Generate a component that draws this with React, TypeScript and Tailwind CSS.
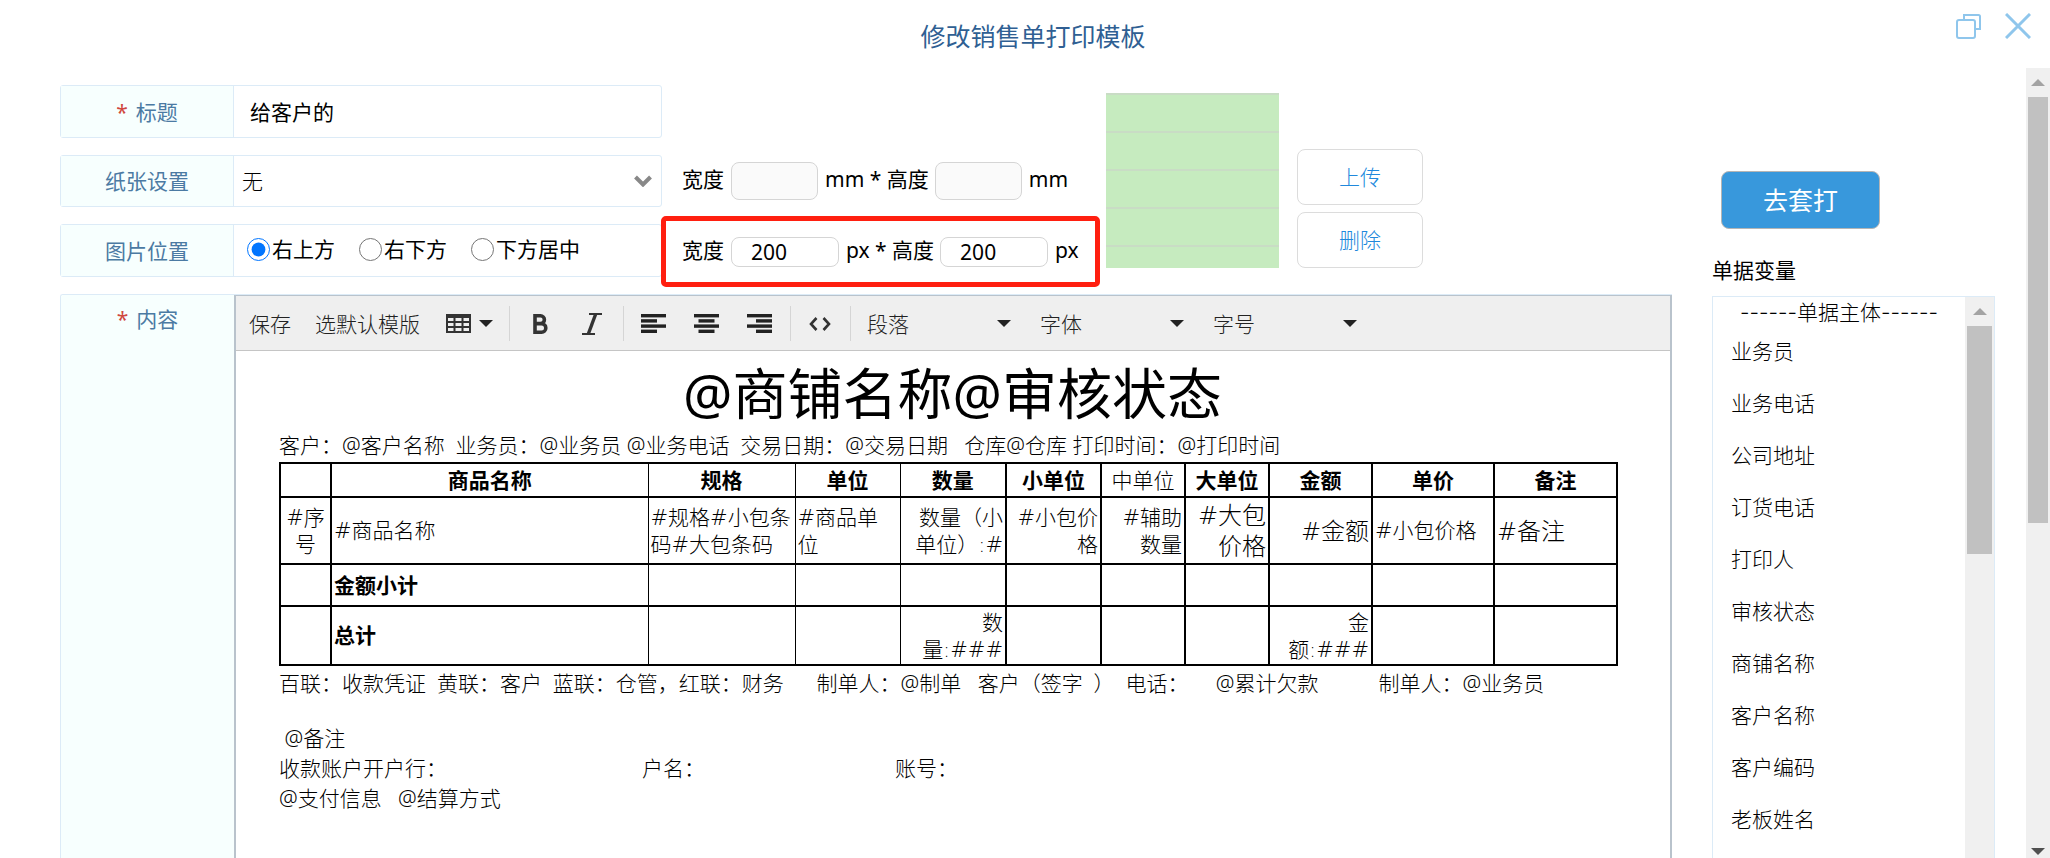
import React, { useState } from 'react';

const variables = ['业务员', '业务电话', '公司地址', '订货电话', '打印人', '审核状态', '商铺名称', '客户名称', '客户编码', '老板姓名'];
const positions = ['右上方', '右下方', '下方居中'];

const Caret = ({ className = '' }: { className?: string }) => (
    <svg viewBox="0 0 14 7" className={`h-[7px] w-[14px] shrink-0 ${className}`} aria-hidden="true">
        <path d="M0 0h14L7 7z" fill="currentColor" />
    </svg>
);

const Separator = () => <span className="h-[35px] w-px shrink-0 bg-[#d5d5d5]" />;

const AlignIcon = ({ type }: { type: 'left' | 'center' | 'right' }) => {
    const widths = [25, 16, 25, 16];
    return (
        <svg viewBox="0 0 25 19" className="h-[19px] w-[25px]" fill="currentColor" aria-hidden="true">
            {widths.map((w, i) => (
                <rect key={i} x={type === 'left' ? 0 : type === 'right' ? 25 - w : (25 - w) / 2} y={i * 5.2} width={w} height={3.4} />
            ))}
        </svg>
    );
};

const ToolSelect = ({ label }: { label: string }) => (
    <label className="relative flex w-[173px] items-center">
        <select aria-label={label} className="w-[150px] appearance-none bg-transparent font-light outline-none">
            <option>{label}</option>
        </select>
        <Caret className="pointer-events-none absolute left-[130px]" />
    </label>
);

const RowLabel = ({ text, required, htmlFor }: { text: string; required?: boolean; htmlFor?: string }) => (
    <label htmlFor={htmlFor} className="flex w-[173px] shrink-0 items-center justify-center gap-2 border-r border-[#dcebf7] bg-[#f7fffe] text-[#4b7aa3]">
        {required && <span className="text-[#d0483e]">*</span>}
        {text}
    </label>
);

const ScrollBar = ({ thumb, down }: { thumb: string; down?: boolean }) => (
    <div className="flex h-full flex-col items-center bg-[#f0f0f0] px-[2px]" aria-hidden="true">
        <div className="flex h-[29px] w-full shrink-0 items-center justify-center text-[#a3a3a3]">
            <Caret className="rotate-180" />
        </div>
        <div className={`w-full bg-[#c1c1c1] ${thumb}`} />
        {down && <Caret className="mt-auto mb-[3px] text-[#505050]" />}
    </div>
);

// the rules around 规格 and 单位 are thinner than the rest
const cell = 'border-2 border-black px-[2px] pt-[2px]';
const nameCell = 'border-2 border-r border-black px-[2px] pt-[2px]';
const thinCell = 'border-x border-y-2 border-black px-[2px] pt-[2px]';
const qtyCell = 'border-2 border-l border-black px-[2px] pt-[2px]';
const cells = [cell, nameCell, thinCell, thinCell, qtyCell, cell, cell, cell, cell, cell, cell];

const PrintTable = () => (
    <table className="w-full table-fixed border-collapse border-2 border-black font-['DejaVu_Sans','Noto_Sans_CJK_SC',sans-serif] leading-[27px]">
        <colgroup>
            <col className="w-[51px]" />
            <col />
            <col className="w-[147px]" />
            <col className="w-[105px]" />
            <col className="w-[106px]" />
            <col className="w-[95px]" />
            <col className="w-[84px]" />
            <col className="w-[84px]" />
            <col className="w-[103px]" />
            <col className="w-[122px]" />
            <col className="w-[123px]" />
        </colgroup>
        <thead>
            <tr className="h-[34px]">
                {['', '商品名称', '规格', '单位', '数量', '小单位', '中单位', '大单位', '金额', '单价', '备注'].map((h, i) => (
                    <th key={i} className={h === '中单位' ? `${cells[i]} font-light` : `${cells[i]} font-bold`}>{h}</th>
                ))}
            </tr>
        </thead>
        <tbody>
            <tr className="h-[67px]">
                <td className={`${cell} text-center`}>#序<br />号</td>
                <td className={nameCell}>#商品名称</td>
                <td className={thinCell}>#规格#小包条<br />码#大包条码</td>
                <td className={thinCell}>#商品单<br />位</td>
                <td className={`${qtyCell} text-right`}>数量（小<br />单位）:#</td>
                <td className={`${cell} text-right`}>#小包价<br />格</td>
                <td className={`${cell} text-right`}>#辅助<br />数量</td>
                <td className={`${cell} text-right text-2xl leading-[31px]`}>#大包<br />价格</td>
                <td className={`${cell} text-right text-2xl`}>#金额</td>
                <td className={cell}>#小包价格</td>
                <td className={`${cell} text-2xl`}>#备注</td>
            </tr>
            <tr className="h-[42px]">
                <td className={cell} />
                <td className={`${nameCell} font-bold`}>金额小计</td>
                {cells.slice(2).map((c, i) => <td key={i} className={c} />)}
            </tr>
            <tr className="h-[59px]">
                <td className={cell} />
                <td className={`${nameCell} font-bold`}>总计</td>
                <td className={thinCell} />
                <td className={thinCell} />
                <td className={`${qtyCell} text-right`}>数<br />量:###</td>
                <td className={cell} />
                <td className={cell} />
                <td className={cell} />
                <td className={`${cell} text-right`}>金<br />额:###</td>
                <td className={cell} />
                <td className={cell} />
            </tr>
        </tbody>
    </table>
);

const Toolbar = () => (
    <div className="flex h-[55px] shrink-0 items-center border-b border-[#c5c5c5] bg-[#efefef] pt-px pl-[13px] font-light text-[#222]">
        <button className="mr-6">保存</button>
        <button className="mr-[26px]">选默认模版</button>
        <button className="mr-4 flex items-center gap-2" aria-label="表格">
            <svg viewBox="0 0 25 19" className="h-[19px] w-[25px]" aria-hidden="true">
                <path d="M0 0h25v19H0zM2 4v3h5.500V4zM9.500 4v3h6V4zM17.500 4v3H23V4zM2 9v3h5.500V9zM9.500 9v3h6V9zM17.500 9v3H23V9zM2 14v3h5.500v-3zM9.500 14v3h6v-3zM17.500 14v3H23v-3z" fill="#333" fillRule="evenodd" />
            </svg>
            <Caret />
        </button>
        <Separator />
        <button className="ml-[22px] flex w-4 justify-center" aria-label="加粗">
            <svg viewBox="0 0 15 20" className="h-5 w-[15px]" fill="none" stroke="#333" strokeWidth="3.6" aria-hidden="true">
                <path d="M2 1.800h5.500a3.900 3.900 0 0 1 0 7.800H2zM2 9.600h6.500a4.200 4.200 0 0 1 0 8.600H2z" />
            </svg>
        </button>
        <button className="mr-[21px] ml-[34px] flex w-5 justify-center" aria-label="斜体">
            <svg viewBox="0 0 20 22" className="h-[22px] w-5" fill="none" stroke="#333" aria-hidden="true">
                <path d="M7 1h13M0 21h13" strokeWidth="2" />
                <path d="M13.500 1.500l-7 19" strokeWidth="3.400" />
            </svg>
        </button>
        <Separator />
        <div className="mr-[18px] ml-[17px] flex items-center gap-7">
            <button aria-label="左对齐"><AlignIcon type="left" /></button>
            <button aria-label="居中"><AlignIcon type="center" /></button>
            <button aria-label="右对齐"><AlignIcon type="right" /></button>
        </div>
        <Separator />
        <button className="mr-[19px] ml-[18px]" aria-label="源代码">
            <svg viewBox="0 0 22 14" className="h-[14px] w-[22px]" fill="none" stroke="#333" strokeWidth="2.600" aria-hidden="true">
                <path d="M7.500 1L2 7l5.500 6M14.500 1L20 7l-5.500 6" />
            </svg>
        </button>
        <Separator />
        <div className="ml-4 flex">
            <ToolSelect label="段落" />
            <ToolSelect label="字体" />
            <ToolSelect label="字号" />
        </div>
    </div>
);

const App = () => {
    const [position, setPosition] = useState('右上方');

    return (
        <div className="flex h-screen flex-col overflow-hidden bg-white font-['Noto_Sans','Noto_Sans_CJK_SC',sans-serif] text-[21px] leading-[30px] text-black">
            <header className="relative flex h-[68px] shrink-0 items-center justify-center pt-1 pl-4">
                <h1 className="text-[25px] text-[#2f5f93]">修改销售单打印模板</h1>
                <div className="absolute top-[13px] right-[19px] flex gap-6 text-[#8fc6ec]">
                    <button aria-label="还原">
                        <svg viewBox="0 0 25 25" className="h-[25px] w-[25px]" fill="none" stroke="currentColor" strokeWidth="2" aria-hidden="true">
                            <rect x="1" y="6" width="18" height="18" rx="2" />
                            <path d="M8 5V1h14.500a1.500 1.500 0 0 1 1.500 1.500V15h-4" />
                        </svg>
                    </button>
                    <button aria-label="关闭">
                        <svg viewBox="0 0 26 26" className="h-[26px] w-[26px]" fill="none" stroke="currentColor" strokeWidth="3" aria-hidden="true">
                            <path d="M1 1l24 24M25 1L1 25" />
                        </svg>
                    </button>
                </div>
            </header>

            <div className="flex min-h-0 flex-1">
                <main className="flex min-w-0 flex-1 flex-col pt-[17px] pl-[60px]">
                    <div className="flex shrink-0">
                        <div className="flex w-[602px] shrink-0 flex-col gap-[17px] pb-[17px]">
                            <div className="flex h-[53px] rounded-[3px] border border-[#dcebf7]">
                                <RowLabel text="标题" required htmlFor="title" />
                                <input id="title" defaultValue="给客户的" className="min-w-0 flex-1 px-4 outline-none" />
                            </div>
                            <div className="relative flex h-[52px] items-stretch rounded-[3px] border border-[#dcebf7]">
                                <RowLabel text="纸张设置" htmlFor="paper" />
                                <select id="paper" className="flex-1 appearance-none px-2 font-light outline-none">
                                    <option>无</option>
                                </select>
                                <svg viewBox="0 0 18 12" className="pointer-events-none absolute top-[19px] right-[9px] h-3 w-[18px]" fill="none" stroke="#888" strokeWidth="4" aria-hidden="true">
                                    <path d="M1.500 2L9 9.500 16.500 2" />
                                </svg>
                            </div>
                            <div className="flex h-[53px] rounded-[3px] border border-[#dcebf7]">
                                <RowLabel text="图片位置" />
                                <div className="flex items-center gap-6 pb-[3px] pl-[13px]">
                                    {positions.map((p) => (
                                        <label key={p} className="flex items-center gap-[2px]">
                                            <input
                                                type="radio"
                                                name="position"
                                                className="h-[23px] w-[23px] accent-[#0075ff]"
                                                checked={position === p}
                                                onChange={() => setPosition(p)}
                                            />
                                            {p}
                                        </label>
                                    ))}
                                </div>
                            </div>
                        </div>

                        <div className="-ml-px w-[445px] shrink-0 pt-[70px]">
                            <div className="flex h-[52px] items-center pl-[21px]">
                                <label htmlFor="paperW" className="pb-1">宽度</label>
                                <input id="paperW" disabled className="mr-[7px] ml-[7px] h-[38px] w-[87px] rounded-lg border border-[#d5d5d5] bg-[#fafafa]" />
                                <span className="pb-1">mm *&nbsp;<label htmlFor="paperH">高度</label></span>
                                <input id="paperH" disabled className="mr-[7px] ml-[6px] h-[38px] w-[87px] rounded-lg border border-[#d5d5d5] bg-[#fafafa]" />
                                <span className="pb-1">mm</span>
                            </div>
                            <div className="mt-[9px] flex h-[71px] w-[439px] items-center rounded-[5px] border-[5px] border-[#ff1f10] pl-4">
                                <label htmlFor="imgW" className="pb-1">宽度</label>
                                <input id="imgW" defaultValue="200" className="mr-[7px] ml-[7px] h-[30px] w-[108px] rounded-lg border border-[#d5d5d5] px-[19px]" />
                                <span className="pb-1">px *&nbsp;<label htmlFor="imgH">高度</label></span>
                                <input id="imgH" defaultValue="200" className="mr-[7px] ml-[6px] h-[30px] w-[108px] rounded-lg border border-[#d5d5d5] px-[19px]" />
                                <span className="pb-1">px</span>
                            </div>
                        </div>

                        <div className="mt-2 h-[175px] w-[173px] shrink-0 overflow-hidden bg-[#c6ebbf]">
                            {[...Array(5)].map((_, i) => <div key={i} className="mb-9 h-[2px] bg-[#c9dcc5]" />)}
                        </div>
                        <div className="ml-[18px] flex w-[126px] shrink-0 flex-col gap-[7px] pt-16 font-light text-[#2088dc]">
                            <button className="h-14 rounded-lg border border-[#dcdcdc]">上传</button>
                            <button className="h-14 rounded-lg border border-[#dcdcdc]">删除</button>
                        </div>
                    </div>

                    <div className="flex min-h-0 flex-1 overflow-hidden rounded-tl-[3px] border-t border-l border-[#dcebf7]">
                        <div className="w-[173px] shrink-0 bg-[#f7fffe] pt-[9px] text-center text-[#4b7aa3]">
                            <span className="mr-2 text-[#d0483e]">*</span>内容
                        </div>
                        <section className="flex min-w-0 flex-1 flex-col border-x-2 border-t border-[#b9c3cc]">
                            <Toolbar />
                            <div className="flex-1 overflow-hidden pr-[52px] pl-[43px] font-light">
                                <h2 className="mt-[5px] pl-2 text-center text-[55px] leading-[74px] font-normal">@商铺名称@审核状态</h2>
                                <p className="pb-[2px] whitespace-pre">客户：@客户名称  业务员：@业务员 @业务电话  交易日期：@交易日期   仓库@仓库 打印时间：@打印时间</p>
                                <PrintTable />
                                <p className="mt-[2px] whitespace-pre">百联：收款凭证  黄联：客户  蓝联：仓管，红联：财务      制单人：@制单   客户（签字  ）  电话：     @累计欠款           制单人：@业务员</p>
                                <p className="mt-[25px] whitespace-pre"> @备注</p>
                                <div className="grid grid-cols-[363px_253px_auto]">
                                    <span>收款账户开户行：</span>
                                    <span>户名：</span>
                                    <span>账号：</span>
                                </div>
                                <p className="whitespace-pre">@支付信息   @结算方式</p>
                            </div>
                        </section>
                    </div>
                </main>

                <aside className="mr-[31px] ml-10 flex w-[283px] shrink-0 flex-col">
                    <button className="mt-[103px] ml-[9px] h-[58px] w-[159px] shrink-0 rounded-lg border border-[#b5b5b5] bg-[#3898dc] text-[25px] text-white">去套打</button>
                    <h3 className="mt-[26px] shrink-0">单据变量</h3>
                    <div className="mt-[11px] flex min-h-0 flex-1 border border-b-0 border-[#dcebf7]">
                        <div className="flex-1 overflow-hidden font-light">
                            <p className="pt-px text-center leading-[29px] font-['Inter','Noto_Sans_CJK_SC',sans-serif]">------单据主体------</p>
                            <ul>
                                {variables.map((v) => (
                                    <li key={v} className="h-[52px]"><button className="h-12 w-full pl-[18px] text-left">{v}</button></li>
                                ))}
                            </ul>
                        </div>
                        <div className="w-[29px] shrink-0">
                            <ScrollBar thumb="h-[228px]" />
                        </div>
                    </div>
                </aside>

                <div className="w-6 shrink-0">
                    <ScrollBar thumb="h-[426px]" down />
                </div>
            </div>
        </div>
    );
};

export default App;
